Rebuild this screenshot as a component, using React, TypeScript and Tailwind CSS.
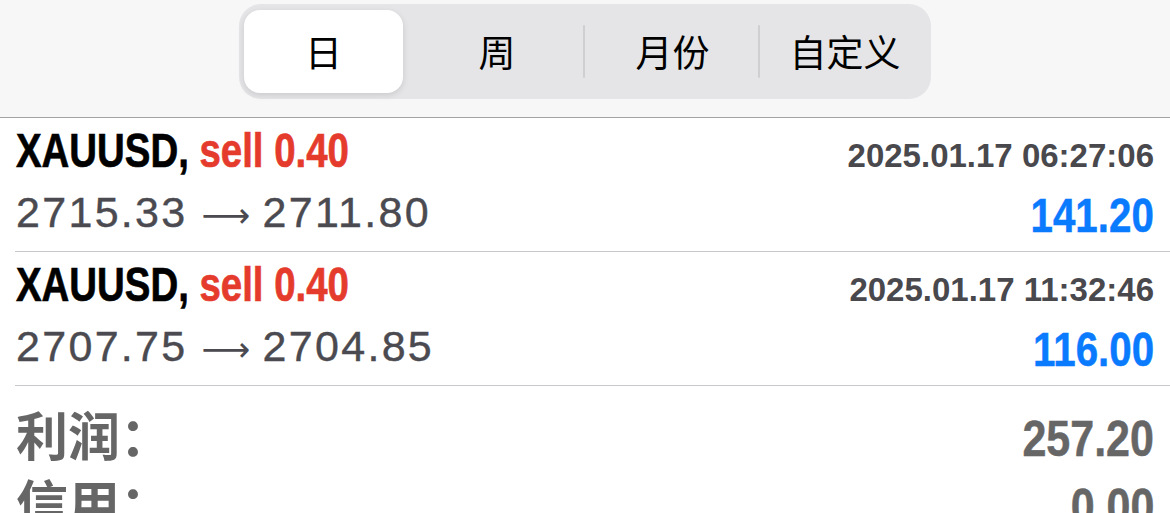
import React from 'react';

const tabs = ['日', '周', '月份', '自定义'];

const deals = [
  { symbol: 'XAUUSD', side: 'sell 0.40', time: '2025.01.17 06:27:06', open: '2715.33', close: '2711.80', profit: '141.20' },
  { symbol: 'XAUUSD', side: 'sell 0.40', time: '2025.01.17 11:32:46', open: '2707.75', close: '2704.85', profit: '116.00' },
];

function PeriodTabs() {
  return (
    <div className="h-[118px] bg-[#f7f7f7] border-b border-[#a3a3a3] flex justify-center pt-[4px]">
      <div className="w-[692px] h-[95px] rounded-[22px] bg-[#e5e5e8] p-[5px] py-[6px] flex items-center text-[37px] text-black">
        <div className="w-[159px] h-full rounded-[16px] bg-white shadow-[0_2px_6px_rgba(0,0,0,0.12)] flex items-center justify-center">
          {tabs[0]}
        </div>
        <div className="w-[180px] h-full flex items-center justify-center pl-[8px]">{tabs[1]}</div>
        <div className="w-[2px] h-[53px] bg-[#cfcfd2] rounded-full" />
        <div className="w-[173px] h-full flex items-center justify-center pl-[2px]">{tabs[2]}</div>
        <div className="w-[2px] h-[53px] bg-[#cfcfd2] rounded-full" />
        <div className="flex-1 h-full flex items-center justify-center pl-[4px]">{tabs[3]}</div>
      </div>
    </div>
  );
}

function DealRow({ deal }: { deal: (typeof deals)[number] }) {
  return (
    <div className="ml-[15px] h-[134px] border-b border-[#c8c8cc] pr-[16px] pl-[1px]">
      <div className="h-[66px] flex items-baseline justify-between leading-[66px]">
        <span className="inline-block origin-left scale-x-[0.8] whitespace-nowrap text-[48px] font-bold [-webkit-text-stroke:0.7px_currentColor]">
          <span className="text-black">{deal.symbol}, </span>
          <span className="text-[#e53b2d]">{deal.side}</span>
        </span>
        <span className="text-[33px] font-bold text-[#48484d]">{deal.time}</span>
      </div>
      <div className="flex items-start justify-between">
        <span className="leading-[57px] text-[43px] text-[#4a4a50] whitespace-nowrap flex items-baseline [-webkit-text-stroke:0.4px_currentColor]">
          <span className="tracking-[2.3px]">{deal.open}</span>
          <span className="inline-block w-[46px] ml-[14px] mr-[15px] text-center font-['DejaVu_Sans',sans-serif] text-[34px] [-webkit-text-stroke:0px]">⟶</span>
          <span className="tracking-[2.3px]">{deal.close}</span>
        </span>
        <span className="inline-block origin-right scale-x-[0.84] leading-[64px] text-[48px] font-bold text-[#0a7aff] [-webkit-text-stroke:0.5px_currentColor]">
          {deal.profit}
        </span>
      </div>
    </div>
  );
}

export default function App() {
  return (
    <div className="w-[1170px] h-[513px] overflow-hidden bg-white font-['Liberation_Sans','Noto_Sans_CJK_SC',sans-serif]">
      <div className="font-['Noto_Sans_CJK_SC',sans-serif]">
        <PeriodTabs />
      </div>
      {deals.map((d) => (
        <DealRow key={d.time} deal={d} />
      ))}
      <div className="pl-[16px] pr-[16px] pt-[14px] text-[#666666]">
        <div className="h-[68px] flex items-baseline justify-between leading-[68px]">
          <span className="font-['Noto_Sans_CJK_SC',sans-serif] font-bold text-[52px]">利润：</span>
          <span className="inline-block origin-right scale-x-[0.86] font-bold text-[50px] [-webkit-text-stroke:0.5px_currentColor]">257.20</span>
        </div>
        <div className="h-[68px] flex items-baseline justify-between leading-[68px]">
          <span className="font-['Noto_Sans_CJK_SC',sans-serif] font-bold text-[52px]">信用：</span>
          <span className="inline-block origin-right scale-x-[0.86] font-bold text-[50px] [-webkit-text-stroke:0.5px_currentColor]">0.00</span>
        </div>
      </div>
    </div>
  );
}
